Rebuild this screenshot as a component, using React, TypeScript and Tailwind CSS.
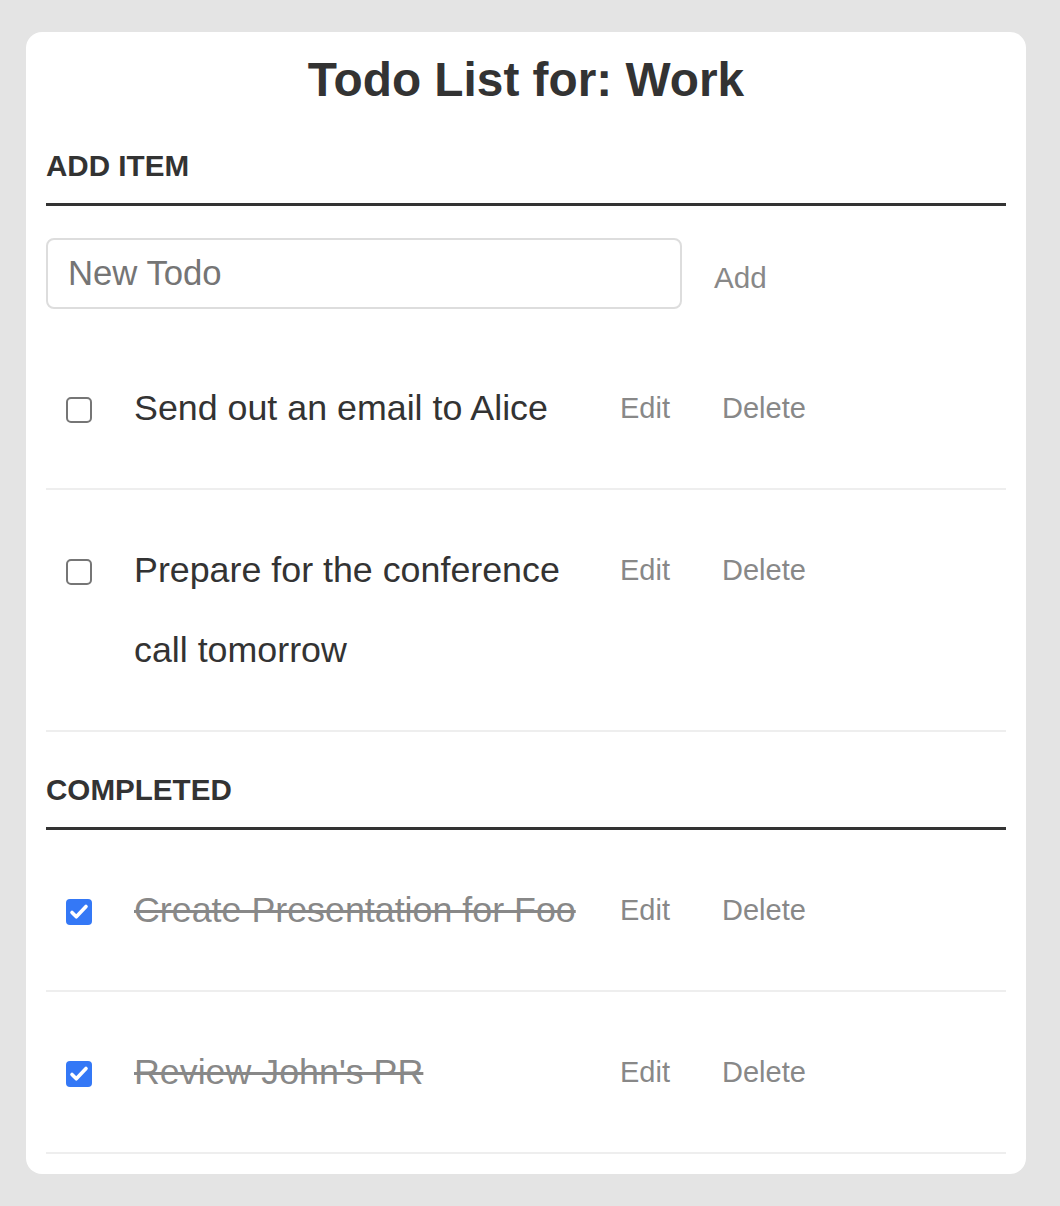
import React from "react";

type Todo = { text: string; done: boolean };

const todos: Todo[] = [
  { text: "Send out an email to Alice", done: false },
  { text: "Prepare for the conference call tomorrow", done: false },
];
const completed: Todo[] = [
  { text: "Create Presentation for Foo", done: true },
  { text: "Review John's PR", done: true },
];

function Box({ checked }: { checked: boolean }) {
  if (checked) {
    return (
      <span className="block h-[26px] w-[26px] rounded-[4px] bg-[#3478f6]">
        <svg width="26" height="26" viewBox="0 0 26 26">
          <path d="M6 13.5 L10.3 17.8 L20 7.5" fill="none" stroke="white" strokeWidth="3.6" strokeLinecap="round" strokeLinejoin="round" />
        </svg>
      </span>
    );
  }
  return <span className="block h-[26px] w-[26px] rounded-[5px] border-2 border-[#767676] bg-white" />;
}

function Row({ todo }: { todo: Todo }) {
  return (
    <div className="flex items-start border-b-2 border-[#eeeeee] py-[40px] pl-[20px]">
      <div className="flex h-[80px] w-[68px] shrink-0 items-center pt-[3px]">
        <Box checked={todo.done} />
      </div>
      <div
        className={
          todo.done
            ? "w-[466px] shrink-0 text-[35.8px] leading-[80px] text-[#888888] line-through decoration-[#888888]"
            : "w-[466px] shrink-0 text-[35.8px] leading-[80px] text-[#333333]"
        }
      >
        {todo.text}
      </div>
      <span className="ml-[20px] text-[29px] leading-[80px] text-[#888888]">Edit</span>
      <span className="ml-[52px] text-[29px] leading-[80px] text-[#888888]">Delete</span>
    </div>
  );
}

function Header({ children, className }: { children: React.ReactNode; className?: string }) {
  return (
    <div className={"border-b-[3px] border-[#333333] pb-[19px] text-[29.6px] font-bold leading-[36px] text-[#333333] " + (className ?? "")}>
      {children}
    </div>
  );
}

export default function App() {
  return (
    <div
      className="min-h-[1206px] w-full bg-[#e4e4e4] pt-[32px] pb-[33px]"
      style={{ fontFamily: '"Liberation Sans", Arial, Helvetica, sans-serif' }}
    >
      <div className="ml-[26px] w-[1000px] rounded-[16px] bg-white px-[20px] pt-[20px] pb-[20px]">
        <h1 className="text-center text-[47.8px] font-bold leading-[56px] text-[#333333]">Todo List for: Work</h1>
        <Header className="mt-[40px]">ADD ITEM</Header>
        <div className="mt-[32px] flex items-start">
          <div className="flex h-[71px] w-[636px] items-center rounded-[8px] border-2 border-[#dddddd] pl-[20px] text-[34.7px] text-[#757575]">
            New Todo
          </div>
          <span className="ml-[32px] mt-[22px] text-[29.6px] leading-[36px] text-[#888888]">Add</span>
        </div>
        <div className="mt-[19px]">
          {todos.map((t) => (
            <Row key={t.text} todo={t} />
          ))}
        </div>
        <Header className="mt-[40px]">COMPLETED</Header>
        <div>
          {completed.map((t) => (
            <Row key={t.text} todo={t} />
          ))}
        </div>
      </div>
    </div>
  );
}
